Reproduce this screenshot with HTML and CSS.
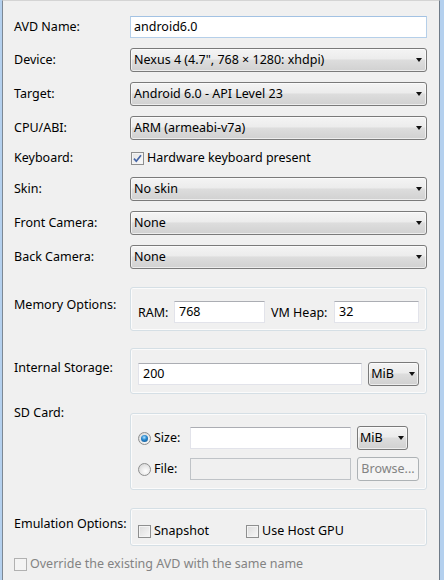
FILE: index.html
```html
<!DOCTYPE html>
<html>
<head>
<meta charset="utf-8">
<link rel="stylesheet" href="styles.css">
</head>
<body>
<div class="frame">
  <div class="window">
    <div class="form">
      <div class="row">
        <div class="lbl">AVD Name:</div>
        <div class="ctl"><div class="text focus">android6.0</div></div>
      </div>
      <div class="row">
        <div class="lbl">Device:</div>
        <div class="ctl"><div class="select">Nexus 4 (4.7", 768 × 1280: xhdpi)<span class="arrow"></span></div></div>
      </div>
      <div class="row">
        <div class="lbl">Target:</div>
        <div class="ctl"><div class="select">Android 6.0 - API Level 23<span class="arrow"></span></div></div>
      </div>
      <div class="row">
        <div class="lbl">CPU/ABI:</div>
        <div class="ctl"><div class="select">ARM (armeabi-v7a)<span class="arrow"></span></div></div>
      </div>
      <div class="row kb">
        <div class="lbl">Keyboard:</div>
        <div class="ctl check-line">
          <span class="check on"><svg width="9" height="9" viewBox="0 0 9 9"><path d="M1 4.6 L3.3 7.2 L8 1.2" fill="none" stroke="#4565a6" stroke-width="1.7"/></svg></span>
          <span>Hardware keyboard present</span>
        </div>
      </div>
      <div class="row">
        <div class="lbl">Skin:</div>
        <div class="ctl"><div class="select">No skin<span class="arrow"></span></div></div>
      </div>
      <div class="row">
        <div class="lbl">Front Camera:</div>
        <div class="ctl"><div class="select">None<span class="arrow"></span></div></div>
      </div>
      <div class="row">
        <div class="lbl">Back Camera:</div>
        <div class="ctl"><div class="select">None<span class="arrow"></span></div></div>
      </div>

      <div class="row top mem">
        <div class="lbl lbl-mem">Memory Options:</div>
        <div class="ctl group g-mem">
          <div class="inline">
            <span class="ram-l">RAM:</span>
            <div class="text ram">768</div>
            <span class="heap-l">VM Heap:</span>
            <div class="text heap">32</div>
          </div>
        </div>
      </div>

      <div class="row top internal">
        <div class="lbl lbl-int">Internal Storage:</div>
        <div class="ctl group g-int">
          <div class="inline">
            <div class="text int">200</div>
            <div class="select unit">MiB<span class="arrow"></span></div>
          </div>
        </div>
      </div>

      <div class="row top sd">
        <div class="lbl">SD Card:</div>
        <div class="ctl group g-sd">
          <div class="inline">
            <div class="radio-l"><span class="radio on"><span class="dot"></span></span><span>Size:</span></div>
            <div class="text sdin"></div>
            <div class="select unit">MiB<span class="arrow"></span></div>
          </div>
          <div class="inline">
            <div class="radio-l"><span class="radio"></span><span>File:</span></div>
            <div class="text sdin disabled"></div>
            <div class="button disabled">Browse...</div>
          </div>
        </div>
      </div>

      <div class="row top emu">
        <div class="lbl lbl-emu">Emulation Options:</div>
        <div class="ctl group g-emu">
          <div class="inline">
            <div class="check-line snap"><span class="check"></span><span>Snapshot</span></div>
            <div class="check-line"><span class="check"></span><span>Use Host GPU</span></div>
          </div>
        </div>
      </div>

      <div class="row override">
        <div class="check-line dis"><span class="check disabled"></span><span>Override the existing AVD with the same name</span></div>
      </div>
    </div>
  </div>
</div>
</body>
</html>
```

FILE: styles.css
```css
html, body {
  margin: 0;
  padding: 0;
  background: #f0f0f0;
}
body {
  font-family: "Noto Sans", "Open Sans", sans-serif;
  font-size: 12.5px;
  color: #000;
  width: 444px;
  height: 580px;
  overflow: hidden;
}
.frame {
  box-sizing: border-box;
  width: 444px;
  height: 580px;
  border-left: 2px solid #b4d0ee;
  border-right: 4px solid #b4d0ee;
}
.window {
  box-sizing: border-box;
  height: 580px;
  border-left: 1px solid #7d8894;
  border-right: 1px solid #6f7b88;
  border-top: 1px solid #d4d4d4;
  background: #f0f0f0;
}
.form {
  padding: 15px 0 0 11px;
  display: flex;
  flex-direction: column;
}
.row {
  display: flex;
  align-items: center;
  margin-top: 10px;
}
.row:first-child { margin-top: 0; }
.row.top { align-items: flex-start; }
.lbl {
  width: 116px;
  flex: none;
  line-height: 16px;
  white-space: nowrap;
}
.ctl {
  width: 297px;
  flex: none;
  box-sizing: border-box;
}
.text {
  box-sizing: border-box;
  height: 22px;
  line-height: 20px;
  padding-left: 3px;
  background: #fff;
  border: 1px solid #e2e3ea;
  border-top-color: #abadb3;
  white-space: nowrap;
}
.text.focus {
  border-color: #b5cfe9;
  border-top-color: #a3c2e3;
}
.text.disabled {
  background: #f0f0f0;
  border-color: #bfc3c7;
}
.select {
  position: relative;
  box-sizing: border-box;
  height: 24px;
  line-height: 21px;
  padding-left: 3px;
  border: 1px solid #7a7a7a;
  border-radius: 3px;
  background: linear-gradient(#f4f4f4 0%, #ececec 45%, #dddddd 50%, #d1d1d1 100%);
  box-shadow: inset 0 0 0 1px rgba(255,255,255,0.6);
  white-space: nowrap;
}
.arrow {
  position: absolute;
  right: 4px;
  top: 9px;
  width: 0;
  height: 0;
  border-left: 3.5px solid transparent;
  border-right: 3.5px solid transparent;
  border-top: 4px solid #111;
}
.check-line {
  display: flex;
  align-items: center;
  gap: 3px;
  line-height: 16px;
  white-space: nowrap;
}
.kb .ctl { padding-left: 1px; }
.kb { align-items: flex-start; height: 17px; }
.check {
  box-sizing: border-box;
  width: 13px;
  height: 13px;
  flex: none;
  border: 1px solid #8e8f8f;
  background: linear-gradient(135deg, #dcdcdc 0%, #f7f7f7 100%);
  box-shadow: inset 0 0 0 1px #f4f4f4;
  display: flex;
  align-items: center;
  justify-content: center;
}
.check.on { background: linear-gradient(135deg, #e4e4e4 0%, #fafafa 100%); }
.check.disabled {
  border-color: #b1b1b1;
  background: #f4f4f4;
  box-shadow: none;
}
.group {
  border: 1px solid #d5dfe5;
  border-radius: 3px;
  box-shadow: inset 0 0 0 1px #fbfbfb;
  padding: 13px 7px 7px 7px;
}
.mem { margin-top: 18px; }
.lbl-mem { margin-top: 10px; }
.internal { margin-top: 17px; }
.lbl-int { margin-top: 12px; }
.sd { margin-top: 11px; }
.g-sd { margin-top: 8px; padding: 12px 7px 8px 7px; display: flex; flex-direction: column; gap: 7px; }
.emu { margin-top: 18px; }
.lbl-emu { margin-top: 8px; }
.g-emu { padding: 14px 7px 6px 7px; }
.override { margin-top: 10px; }
.inline {
  display: flex;
  align-items: center;
  white-space: nowrap;
}
.ram-l { width: 36px; }
.text.ram { width: 91px; padding-left: 4px; }
.heap-l { width: 63px; margin-left: 6px; }
.text.heap { width: 85px; padding-left: 4px; }
.text.int { width: 225px; padding-left: 4px; }
.select.unit { width: 51px; margin-left: 6px; padding-left: 2px; }
.select.unit .arrow { right: 3px; }
.radio-l {
  width: 52px;
  display: flex;
  align-items: center;
  gap: 3px;
  line-height: 16px;
}
.radio {
  box-sizing: border-box;
  width: 13px;
  height: 13px;
  border-radius: 50%;
  border: 1px solid #8e8f8f;
  background: radial-gradient(circle at 60% 65%, #ffffff 0%, #e6e6e6 55%, #cfcfcf 100%);
  display: flex;
  align-items: center;
  justify-content: center;
}
.radio .dot {
  width: 7px;
  height: 7px;
  border-radius: 50%;
  background: radial-gradient(circle at 45% 35%, #b6e4ff 0%, #2a8ad0 40%, #0b4a84 100%);
}
.text.sdin { width: 161px; }
.button {
  box-sizing: border-box;
  width: 62px;
  height: 24px;
  margin-left: 6px;
  line-height: 22px;
  text-align: center;
  border: 1px solid #adb2b5;
  border-radius: 3px;
  background: #f4f4f4;
  color: #838383;
}
.snap { width: 108px; }
.dis { color: #838383; }
```
